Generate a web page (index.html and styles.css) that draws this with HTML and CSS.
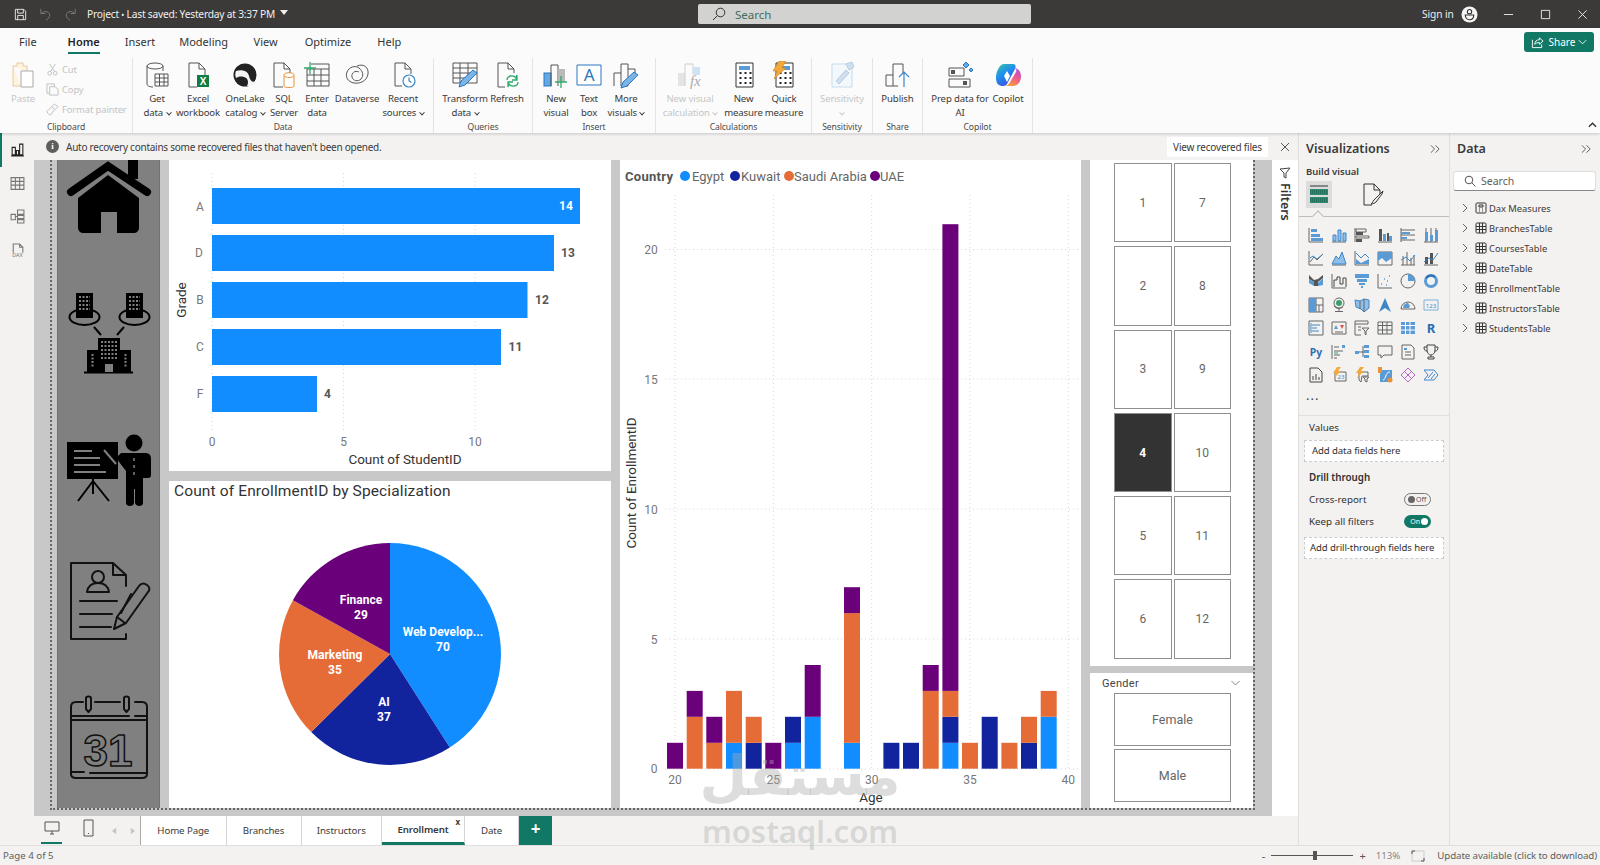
FILE: index.html
```html
<!DOCTYPE html>
<html lang="en">
<head>
<meta charset="utf-8">
<title>Power BI</title>
<link rel="stylesheet" href="styles.css">
</head>
<body>
<header class="titlebar">
  <div class="tb-left">
    <svg class="tb-ico" viewBox="0 0 16 16"><path d="M2.500 2.500h9l2 2v9h-11zM5 2.500v4h6v-4M5 13.500v-4.500h6v4.500"/></svg>
    <svg class="tb-ico dim" viewBox="0 0 16 16"><path d="M3 2v5h5M3.500 7c2-3 8-3 9 1 .5 3-2 5-4 6"/></svg>
    <svg class="tb-ico dim" viewBox="0 0 16 16"><path d="M13 2v5H8M12.500 7c-2-3-8-3-9 1-.5 3 2 5 4 6"/></svg>
    <span class="tb-title">Project <small>•</small> Last saved: Yesterday at 3:37 PM</span>
    <svg class="tb-caret" viewBox="0 0 8 5"><path d="M0 0h8L4 5z"/></svg>
  </div>
  <div class="tb-search">
    <svg class="tb-sicon" viewBox="0 0 14 14"><circle cx="8.500" cy="5.500" r="4.300"/><path d="M5.500 8.500 1 13"/></svg>
    <span>Search</span>
  </div>
  <div class="tb-right">
    <span class="signin">Sign in</span>
    <svg class="avatar" viewBox="0 0 18 18"><circle cx="9" cy="9" r="8.500" class="av-bg"/><circle cx="9" cy="6" r="2.300" class="av-l"/><path d="M4.500 9.500h9c0 3-2 5-4.500 5s-4.500-2-4.500-5z" class="av-l"/></svg>
    <svg class="win-ico win-min" viewBox="0 0 12 12"><path d="M1 6h10"/></svg>
    <svg class="win-ico win-max" viewBox="0 0 12 12"><path d="M1.500 1.500h9v9h-9z"/></svg>
    <svg class="win-ico" viewBox="0 0 12 12"><path d="M1.500 1.500l9 9M10.500 1.500l-9 9"/></svg>
  </div>
</header>

<section class="ribbon">
  <nav class="rb-tabs">
    <span class="rb-tab t-file">File</span>
    <span class="rb-tab t-home active">Home</span>
    <span class="rb-tab t-insert">Insert</span>
    <span class="rb-tab t-model">Modeling</span>
    <span class="rb-tab t-view">View</span>
    <span class="rb-tab t-opt">Optimize</span>
    <span class="rb-tab t-help">Help</span>
    <button class="share">
      <svg viewBox="0 0 14 14"><path d="M1.500 4v8.500h10V9M4 9c0-3 2-5 5-5V2l4 3.500L9 9V7C7 7 5.500 7.500 4 9z"/></svg>
      Share
      <svg class="share-c" viewBox="0 0 10 6"><path d="M1 1l4 4 4-4"/></svg>
    </button>
  </nav>
  <div class="rb-groups">
    <div class="grp g-clip">
      <div class="clip-row">
        <div class="btn disabled paste">
          <svg class="ico" viewBox="0 0 26 28"><path class="o-p" d="M3 5h4V2h6v3h4v6M3 5v20h8"/><path class="gr-s" d="M11 10h12v16H11z"/></svg>
          <span>Paste</span>
        </div>
        <ul class="clip-list">
          <li><svg viewBox="0 0 12 14"><path d="M3 1l5 8M9 1L4 9"/><circle cx="3" cy="11" r="2"/><circle cx="9" cy="11" r="2"/></svg>Cut</li>
          <li><svg viewBox="0 0 14 14"><path d="M1 1h8v3M1 1v10h3M4 4h6l3 3v6H4z"/></svg>Copy</li>
          <li><svg viewBox="0 0 14 14"><path d="M9 1l4 3-3 3-4-3zM6 4L1 9c1 3 3 4 4 4l4-6"/></svg>Format painter</li>
        </ul>
      </div>
      <div class="grp-label">Clipboard</div>
    </div>

    <div class="grp g-data">
      <div class="btn-row">
        <div class="btn">
          <svg class="ico" viewBox="0 0 26 28"><ellipse class="k" cx="11" cy="5" rx="8" ry="3"/><path class="k" d="M3 5v18c0 2 3 3 6 3M19 5v5"/><path class="k" d="M11 13h13v12H11zM11 17h13M11 21h13M15.500 13v12M20 13v12"/></svg>
          <span>Get<br>data <i class="chev"></i></span>
        </div>
        <div class="btn">
          <svg class="ico" viewBox="0 0 26 28"><path class="k" d="M4 2h10l6 6v6M14 2v6h6M4 2v24h8"/><rect class="f-xl" x="12" y="14" width="12" height="12"/><text class="xl-t" x="18" y="24">X</text></svg>
          <span>Excel<br>workbook</span>
        </div>
        <div class="btn">
          <svg class="ico" viewBox="0 0 26 28"><circle cx="13" cy="14" r="11.500" class="f-k"/><path d="M4 10c6-2 12 0 13 5s4 7 7 5c-1 4-6 6-9 5 2-4 1-8-3-9s-6 0-8 1c-1-2-1-5 0-7z" class="f-w"/></svg>
          <span>OneLake<br>catalog <i class="chev"></i></span>
        </div>
        <div class="btn">
          <svg class="ico" viewBox="0 0 26 28"><path class="k" d="M3 2h10l6 6v6M13 2v6h6M3 2v24h9"/><path class="o" d="M13 14c0-3 10-3 10 0v11c0 2-10 2-10 0z"/><path class="o" d="M13 15c2 2 8 2 10 0"/></svg>
          <span>SQL<br>Server</span>
        </div>
        <div class="btn">
          <svg class="ico" viewBox="0 0 26 28"><path class="k" d="M7 3h18v22H3V8M3 8h22M3 14h22M3 20h22M10 8v17M17 8v17"/><path class="g2" d="M0 7h12M6 1v12"/></svg>
          <span>Enter<br>data</span>
        </div>
        <div class="btn">
          <svg class="ico" viewBox="0 0 26 28"><path class="k" d="M13 5c7-3 12 2 11 8-1 7-8 10-14 9S1 16 3 11s8-7 12-4 5 8 2 11-8 2-9-2 3-7 7-5"/></svg>
          <span>Dataverse</span>
        </div>
        <div class="btn">
          <svg class="ico" viewBox="0 0 26 28"><path class="k" d="M5 2h10l6 6v5M15 2v6h6M5 2v23h7"/><circle class="bl" cx="19" cy="20" r="6"/><path class="bl" d="M19 16.500V20l2.500 1.500"/></svg>
          <span>Recent<br>sources <i class="chev"></i></span>
        </div>
      </div>
      <div class="grp-label">Data</div>
    </div>

    <div class="grp g-query">
      <div class="btn-row">
        <div class="btn">
          <svg class="ico" viewBox="0 0 26 28"><path class="k" d="M1 2h24v20H1zM1 7h24M1 12h24M1 17h14M8 2v20M16 2v15"/><path class="f-pen" d="M7 26l2-6L21 9l4 3-12 12z"/></svg>
          <span>Transform<br>data <i class="chev"></i></span>
        </div>
        <div class="btn">
          <svg class="ico" viewBox="0 0 26 28"><path class="k" d="M4 2h10l6 6v4M14 2v6h6M4 2v24h7"/><path class="g2" d="M13 19c0-4 6-6 9-2l1-3v5h-5M24 21c0 4-6 6-9 2l-1 3v-5h5"/></svg>
          <span>Refresh</span>
        </div>
      </div>
      <div class="grp-label">Queries</div>
    </div>

    <div class="grp g-insert">
      <div class="btn-row">
        <div class="btn">
          <svg class="ico" viewBox="0 0 26 28"><rect x="1" y="12" width="7" height="13" class="f-bl"/><path class="k" d="M8 25V4h7v21"/><rect x="15" y="8" width="7" height="13" class="f-gr"/><path class="g2" d="M12 21h12M18 15v12"/></svg>
          <span>New<br>visual</span>
        </div>
        <div class="btn">
          <svg class="ico" viewBox="0 0 26 28"><path class="bln" d="M1 4h24v20H1z"/><text class="a-t" x="13" y="20">A</text></svg>
          <span>Text<br>box</span>
        </div>
        <div class="btn">
          <svg class="ico" viewBox="0 0 26 28"><path class="k" d="M1 25V12h7M8 25V3h7v22zM15 8h7v6"/><path class="f-pen" d="M8 27l2-6L21 11l4 3-11 11z"/></svg>
          <span>More<br>visuals <i class="chev"></i></span>
        </div>
      </div>
      <div class="grp-label">Insert</div>
    </div>

    <div class="grp g-calc">
      <div class="btn-row">
        <div class="btn disabled">
          <svg class="ico" viewBox="0 0 26 28"><rect x="1" y="12" width="7" height="13" class="f-lg"/><path class="lg" d="M8 25V3h8v10"/><rect x="16" y="6" width="7" height="8" class="f-lb"/><text class="fx-t" x="13" y="25">fx</text></svg>
          <span>New visual<br>calculation <i class="chev"></i></span>
        </div>
        <div class="btn">
          <svg class="ico" viewBox="0 0 26 28"><use href="#calc"/></svg>
          <span>New<br>measure</span>
        </div>
        <div class="btn">
          <svg class="ico" viewBox="0 0 26 28"><use href="#calc"/><path class="f-bolt" d="M8 0h7l-4 7h4L3 18l3-8H2z"/></svg>
          <span>Quick<br>measure</span>
        </div>
      </div>
      <div class="grp-label">Calculations</div>
    </div>

    <div class="grp g-sens">
      <div class="btn-row">
        <div class="btn disabled">
          <svg class="ico" viewBox="0 0 26 28"><path class="lbs" d="M3 3h20v23H3z"/><path class="f-lbs" d="M7 20L17 9l3 3-10 11z"/><path class="f-lbs" d="M17 3l6-2 2 5-5 3z"/></svg>
          <span>Sensitivity<br><i class="chev"></i></span>
        </div>
      </div>
      <div class="grp-label">Sensitivity</div>
    </div>

    <div class="grp g-share">
      <div class="btn-row">
        <div class="btn">
          <svg class="ico" viewBox="0 0 26 28"><path class="k" d="M1 25V14h7M8 25V3h10v11M1 25h12"/><path class="bl" d="M19 26V11M14 16l5-5 5 5"/></svg>
          <span>Publish</span>
        </div>
      </div>
      <div class="grp-label">Share</div>
    </div>

    <div class="grp g-copilot">
      <div class="btn-row">
        <div class="btn">
          <svg class="ico" viewBox="0 0 26 28"><path class="k" d="M2 7h15v8H2zM2 18h21v8H2z"/><rect x="4" y="9" width="4" height="4" class="f-dk"/><rect x="16" y="20" width="4" height="4" class="f-dk"/><path class="f-bl" d="M19 1l3 3-3 3-3-3zM24 7l2 2-2 2-2-2z"/></svg>
          <span>Prep data for<br>AI</span>
        </div>
        <div class="btn">
          <svg class="ico" viewBox="0 0 26 28">
            <defs>
              <linearGradient id="cpa" x1="0" y1="0" x2="0.600" y2="1"><stop offset="0" stop-color="#37c6a0"/><stop offset=".5" stop-color="#1f8ff0"/><stop offset="1" stop-color="#3a4fd8"/></linearGradient>
              <linearGradient id="cpb" x1="0.800" y1="0" x2="0.300" y2="1"><stop offset="0" stop-color="#b44bd8"/><stop offset=".5" stop-color="#ef5d8c"/><stop offset="1" stop-color="#f5a33b"/></linearGradient>
            </defs>
            <path class="cp1" d="M9 3h9c3 0 3 3 2 5l-7 13c-1 3-3 4-5 4-4 0-7-2-7-8 0-7 4-14 8-14z"/>
            <path class="cp2" d="M18 7c5 0 8 3 8 8 0 7-4 10-9 10H9c3 0 5-2 6-4l6-10c1-2 0-4-3-4z"/>
            <path class="cp3" d="M9 15l3-5 3 5-3 6z"/>
          </svg>
          <span>Copilot</span>
        </div>
      </div>
      <div class="grp-label">Copilot</div>
    </div>
    <svg class="rb-collapse" viewBox="0 0 10 6"><path d="M1 5l4-4 4 4"/></svg>
  </div>
</section>

<svg class="defs" width="0" height="0">
  <symbol id="calc" viewBox="0 0 26 28"><path class="k2" d="M5 2h17v24H5z"/><rect class="f-lbc" x="8" y="5" width="11" height="4"/><path class="dots" d="M8.500 12h2m3 0h2m3 0h2M8.500 17h2m3 0h2m3 0h2M8.500 22h2m3 0h2m3 0h2"/></symbol>
</svg>

<main class="main">
  <aside class="rail">
    <div class="rail-item on"><svg viewBox="0 0 14 14"><path d="M1 13h12M2 12V5h3v7zM6 12V8h2v4zM9 12V2h3v10z"/></svg></div>
    <div class="rail-item"><svg viewBox="0 0 14 14"><path d="M1 1.500h12v11H1zM1 5h12M1 8.500h12M5 1.500v11M9 1.500v11"/></svg></div>
    <div class="rail-item"><svg viewBox="0 0 14 14"><path d="M1 5h4v5H1zM7 1h6v4H7zM7 6h6v3H7zM7 10h6v3H7zM5 7h2"/></svg></div>
    <div class="rail-item"><svg viewBox="0 0 14 14"><path d="M3 9V1h6l3 3v5M9 1v3h3"/><text class="dax" x="7" y="13">DAX</text></svg></div>
  </aside>

  <div class="center">
    <div class="notice">
      <span class="info">i</span>
      <span class="notice-t">Auto recovery contains some recovered files that haven't been opened.</span>
      <button class="recover">View recovered files</button>
      <svg class="notice-x" viewBox="0 0 10 10"><path d="M1 1l8 8M9 1L1 9"/></svg>
    </div>
    <div class="work">
      <div class="canvas">
        <div class="page">
          <div class="side">
            <svg viewBox="57 160 103 648" width="103" height="648">
              <g class="solid">
                <rect x="128" y="155" width="10" height="24"/>
                <path class="roof" d="M71 192l37-26 39 26"/>
                <path d="M108 175l31 23v29c0 4-2 6-6 6H84c-4 0-6-2-6-6v-29z"/>
                <rect class="hole" x="101" y="212" width="16" height="22"/>
              </g>
              <g class="solid">
                <ellipse class="line nofill" cx="84.500" cy="317" rx="15" ry="8"/>
                <ellipse class="line nofill" cx="134.500" cy="317" rx="15" ry="8"/>
                <path d="M76 293h17v25H76zM126 293h17v25h-17zM98 338h22v34H98zM87 350h11v22H87zM120 350h11v22h-11z"/>
                <path class="line" d="M84 372.500h49M94 327l7 8M124 327l-7 8"/>
                <path class="win" d="M79 297h11M79 301h11M79 305h11M79 309h11M129 297h11M129 301h11M129 305h11M129 309h11M101 342h16M101 346h16M101 350h16M101 354h16M101 358h16"/>
                <path class="win" d="M92.500 354v14M125.500 354v14"/>
                <rect class="hole" x="105" y="364" width="8" height="8"/>
              </g>
              <g class="solid">
                <rect x="67" y="442" width="51" height="37"/>
                <path class="brd" d="M74 451h18M74 458h26M74 465h26M74 472h32"/>
                <path class="line" d="M93 479v15M93 481L78 501M93 481l16 20"/>
                <circle cx="134" cy="443" r="8.500"/>
                <path d="M130 453h15c4 0 6 2 6 6v16c0 2-1 3-3 3h-5v25c0 4-7 4-8 0v-14h-1v14c0 4-8 4-8 0v-32l-10-13 5-5z"/>
                <path class="w3" d="M134 458v18"/>
                <path class="line gb" d="M104 450l12 14"/>
              </g>
              <g class="outline">
                <path d="M113 563H71v76h55v-5M113 563l13 12v11M113 563v12h13"/>
                <circle cx="98" cy="577" r="6"/>
                <path d="M87 592c1-6 5-9 11-9s10 3 11 9z"/>
                <path d="M80 601h37M80 614h32M80 627h31"/>
                <path d="M114 629l3-12 22-31c2-3 5-3 8-1s3 5 1 7l-22 31z"/>
                <path d="M117 617l8 6M131 594l-10 19"/>
              </g>
              <g class="outline">
                <path d="M83 702h-7c-3 0-5 2-5 5v67c0 3 2 4 5 4h66c3 0 5-1 5-4v-67c0-3-2-5-5-5h-7M95 702h25"/>
                <path d="M71 716h58M135 716h12M71 720h76M71 772h13M90 773h57"/>
                <path d="M86 709v-11c0-2 5-2 5 0v11l-2.500 3zM124 709v-11c0-2 5-2 5 0v11l-2.500 3z"/>
                <text class="cal" x="108" y="766">31</text>
              </g>
            </svg>
          </div>

          <div class="col-mid">
            <article class="card c1">
              <svg viewBox="169 160 442 311" width="442" height="311">
                <path class="grid" d="M212 173v257M343.500 173v257M475 173v257"/>
                <rect class="egypt" x="212" y="188" width="368" height="36"/>
                <rect class="egypt" x="212" y="235" width="342" height="36"/>
                <rect class="egypt" x="212" y="282" width="315.500" height="36"/>
                <rect class="egypt" x="212" y="329" width="289" height="36"/>
                <rect class="egypt" x="212" y="376" width="105" height="36"/>
                <text class="tick mid" x="200" y="211">A</text>
                <text class="tick mid" x="199" y="257">D</text>
                <text class="tick mid" x="200" y="304">B</text>
                <text class="tick mid" x="200" y="351">C</text>
                <text class="tick mid" x="200" y="398">F</text>
                <text class="val-w mid" x="566" y="210">14</text>
                <text class="val mid" x="568" y="257">13</text>
                <text class="val mid" x="542" y="304">12</text>
                <text class="val mid" x="515.500" y="351">11</text>
                <text class="val mid" x="327.500" y="398">4</text>
                <text class="tick mid" x="212" y="446">0</text>
                <text class="tick mid" x="343.500" y="446">5</text>
                <text class="tick mid" x="475" y="446">10</text>
                <text class="axis mid" x="405" y="464">Count of StudentID</text>
                <text class="axis mid" transform="translate(186 300) rotate(-90)">Grade</text>
              </svg>
            </article>
            <article class="card c2">
              <svg viewBox="169 481 442 327" width="442" height="327">
                <text class="ctitle" x="174" y="496">Count of EnrollmentID by Specialization</text>
                <path class="egypt" d="M390 654V543A111 111 0 0 1 449.800 747.500Z"/>
                <path class="kuwait" d="M390 654L449.800 747.500A111 111 0 0 1 311.200 732.100Z"/>
                <path class="saudi" d="M390 654L311.200 732.100A111 111 0 0 1 292.900 600.300Z"/>
                <path class="uae" d="M390 654L292.900 600.300A111 111 0 0 1 390 543Z"/>
                <text class="pie mid" x="443" y="636">Web Develop...</text>
                <text class="pie mid" x="443" y="651">70</text>
                <text class="pie mid" x="384" y="706">AI</text>
                <text class="pie mid" x="384" y="721">37</text>
                <text class="pie mid" x="335" y="659">Marketing</text>
                <text class="pie mid" x="335" y="674">35</text>
                <text class="pie mid" x="361" y="604">Finance</text>
                <text class="pie mid" x="361" y="619">29</text>
              </svg>
            </article>
          </div>

          <article class="card c3">
            <svg viewBox="620 160 461 648" width="461" height="648">
              <text class="lg-title" x="625" y="181">Country</text>
              <circle class="egypt" cx="685" cy="176" r="5"/><text class="lg-item" x="692" y="181">Egypt</text>
              <circle class="kuwait" cx="735" cy="176" r="5"/><text class="lg-item" x="741" y="181">Kuwait</text>
              <circle class="saudi" cx="789" cy="176" r="5"/><text class="lg-item" x="794" y="181">Saudi Arabia</text>
              <circle class="uae" cx="875" cy="176" r="5"/><text class="lg-item" x="880" y="181">UAE</text>
              <path class="grid" d="M675 195v574M773.300 195v574M871.700 195v574M970 195v574M1068.300 195v574M665 249.500h413M665 379h413M665 509h413M665 639h413M665 769h413"/>
              <g>
                <rect class="uae" x="667" y="742.800" width="16" height="25.900"/>
                <rect class="saudi" x="686.700" y="716.800" width="16" height="51.900"/><rect class="uae" x="686.700" y="690.900" width="16" height="25.900"/>
                <rect class="saudi" x="706.300" y="742.800" width="16" height="25.900"/><rect class="uae" x="706.300" y="716.800" width="16" height="26"/>
                <rect class="egypt" x="726" y="742.800" width="16" height="25.900"/><rect class="saudi" x="726" y="690.900" width="16" height="51.900"/>
                <rect class="kuwait" x="745.700" y="742.800" width="16" height="25.900"/><rect class="saudi" x="745.700" y="716.800" width="16" height="26"/>
                <rect class="uae" x="765.300" y="742.800" width="16" height="25.900"/>
                <rect class="egypt" x="785" y="742.800" width="16" height="25.900"/><rect class="kuwait" x="785" y="716.800" width="16" height="26"/>
                <rect class="egypt" x="804.700" y="716.800" width="16" height="51.900"/><rect class="uae" x="804.700" y="665" width="16" height="51.800"/>
                <rect class="egypt" x="844" y="742.800" width="16" height="25.900"/><rect class="saudi" x="844" y="613.100" width="16" height="129.700"/><rect class="uae" x="844" y="587.200" width="16" height="25.900"/>
                <rect class="kuwait" x="883.400" y="742.800" width="16" height="25.900"/>
                <rect class="kuwait" x="903" y="742.800" width="16" height="25.900"/>
                <rect class="saudi" x="922.700" y="690.900" width="16" height="77.800"/><rect class="uae" x="922.700" y="665" width="16" height="25.900"/>
                <rect class="egypt" x="942.400" y="742.800" width="16" height="25.900"/><rect class="kuwait" x="942.400" y="716.800" width="16" height="26"/><rect class="saudi" x="942.400" y="690.900" width="16" height="25.900"/><rect class="uae" x="942.400" y="224.200" width="16" height="466.700"/>
                <rect class="saudi" x="962" y="742.800" width="16" height="25.900"/>
                <rect class="kuwait" x="981.700" y="716.800" width="16" height="51.900"/>
                <rect class="saudi" x="1001.400" y="742.800" width="16" height="25.900"/>
                <rect class="kuwait" x="1021" y="742.800" width="16" height="25.900"/><rect class="saudi" x="1021" y="716.800" width="16" height="26"/>
                <rect class="egypt" x="1040.700" y="716.800" width="16" height="51.900"/><rect class="saudi" x="1040.700" y="690.900" width="16" height="25.900"/>
              </g>
              <text class="tick mid" x="651" y="254">20</text>
              <text class="tick mid" x="651" y="384">15</text>
              <text class="tick mid" x="651" y="514">10</text>
              <text class="tick mid" x="654" y="644">5</text>
              <text class="tick mid" x="654" y="773">0</text>
              <text class="tick mid" x="675" y="784">20</text>
              <text class="tick mid" x="773.300" y="784">25</text>
              <text class="tick mid" x="871.700" y="784">30</text>
              <text class="tick mid" x="970" y="784">35</text>
              <text class="tick mid" x="1068.300" y="784">40</text>
              <text class="axis mid" x="871" y="802">Age</text>
              <text class="axis mid" transform="translate(636 483) rotate(-90)">Count of EnrollmentID</text>
            </svg>
          </article>

          <div class="col-right">
            <article class="card slicer">
              <button class="chip">1</button><button class="chip">7</button>
              <button class="chip">2</button><button class="chip">8</button>
              <button class="chip">3</button><button class="chip">9</button>
              <button class="chip sel">4</button><button class="chip">10</button>
              <button class="chip">5</button><button class="chip">11</button>
              <button class="chip">6</button><button class="chip">12</button>
            </article>
            <article class="card gender">
              <div class="gender-h"><span>Gender</span><svg viewBox="0 0 10 6"><path d="M1 1l4 4 4-4"/></svg></div>
              <button class="chip big">Female</button>
              <button class="chip big">Male</button>
            </article>
          </div>
        </div>
      </div>
      <aside class="filters">
        <svg viewBox="0 0 12 12"><path d="M1 2l10-1-4 5v5L5 10V6z"/></svg>
        <span>Filters</span>
      </aside>
    </div>
    <nav class="pages">
      <div class="view-sw">
        <span class="view-desk"><svg viewBox="0 0 16 14"><path d="M1 1h14v9H1zM6 13h4M8 10v3"/></svg></span>
        <span class="view-ph"><svg viewBox="0 0 11 18"><path d="M1 1h9v16H1zM5 14.500h1"/></svg></span>
        <svg class="pg-arrow a1" viewBox="0 0 6 8"><path d="M5 0v8L0 4z"/></svg>
        <svg class="pg-arrow a2" viewBox="0 0 6 8"><path d="M1 0v8l5-4z"/></svg>
      </div>
      <span class="ptab w-home">Home Page</span>
      <span class="ptab w-br">Branches</span>
      <span class="ptab w-in">Instructors</span>
      <span class="ptab w-en active">Enrollment<b>x</b></span>
      <span class="ptab w-da">Date</span>
      <span class="ptab add">+</span>
    </nav>
  </div>

  <aside class="viz">
    <h2 class="pane-h">Visualizations<svg viewBox="0 0 12 10"><path d="M1 1l4 4-4 4M6 1l4 4-4 4"/></svg></h2>
    <h3 class="build">Build visual</h3>
    <div class="build-tabs">
      <span class="bt on"><svg viewBox="0 0 24 24"><path class="dk" d="M3 3h18"/><rect class="tg" x="3" y="6" width="18" height="6"/><rect class="tg" x="3" y="14" width="18" height="6"/><path class="stripe" d="M3 8h18M3 10h18M3 16h18M3 18h18"/></svg></span>
      <span class="bt"><svg viewBox="0 0 24 24"><path class="dk" d="M11 22H3V1h10l6 6v4M13 1v6h6"/><path class="dk" d="M10 21c2-1 2-4 4-5l8-8-1 3-6 8c-1 1-3 2-5 2z"/></svg></span>
    </div>
    <div class="build-line"><i></i></div>
    <div class="viz-grid">
      <svg viewBox="0 0 16 16"><path class="s" d="M1 1v14h14"/><path class="b" d="M3 2h6v3H3zM3 7h9v3H3zM3 11h12v3H3z"/></svg>
      <svg viewBox="0 0 16 16"><path class="s" d="M1 15h14"/><path class="sb" d="M2 8h3v6H2zM7 3h3v11H7zM12 6h3v8h-3z"/></svg>
      <svg viewBox="0 0 16 16"><path class="s" d="M1 1v14M2 2h10v3H2zM2 9h13v2H2z"/><path class="d" d="M2 5h7v3H2zM2 12h6v3H2z"/></svg>
      <svg viewBox="0 0 16 16"><path class="s" d="M1 15h14"/><path class="d" d="M2 2h3v12H2zM10 6h2v8h-2z"/><path class="b" d="M6 7h3v7H6zM12 9h3v5h-3z"/></svg>
      <svg viewBox="0 0 16 16"><path class="s" d="M1 1v14M1 3h14M1 8h14M1 13h14"/><path class="b" d="M1 5h9v2H1zM1 10h6v2H1z"/></svg>
      <svg viewBox="0 0 16 16"><path class="s" d="M1 15h14M3 1v14M8 1v14M13 1v14"/><path class="b" d="M2 5h3v9H2zM7 8h3v6H7zM12 3h3v11h-3z"/></svg>
      <svg viewBox="0 0 16 16"><path class="s" d="M1 1v14h14M2 12l4-5 3 3 6-6"/><path class="sbl" d="M2 8l3-2 4 3 6-5"/></svg>
      <svg viewBox="0 0 16 16"><path class="s" d="M1 15h14"/><path class="sb" d="M1 14l4-8 3 3 3-7 4 12z"/></svg>
      <svg viewBox="0 0 16 16"><path class="s" d="M1 1v14h14"/><path class="sbl" d="M2 3l5 5 4-4 4 4"/><path class="b" d="M2 9l5 4 8-4v5H2z"/></svg>
      <svg viewBox="0 0 16 16"><path class="s" d="M1 2h14v13H1z"/><path class="b" d="M1 2h14v6l-6 4-4-4-4 3z"/></svg>
      <svg viewBox="0 0 16 16"><path class="s" d="M1 15h14M3 6v9M7 2v13M11 8v7M14 5v10"/><path class="sbl" d="M1 10l5-3 4 4 5-6"/></svg>
      <svg viewBox="0 0 16 16"><path class="d" d="M2 7h3v7H2zM7 3h3v11H7z"/><path class="s" d="M1 15h14"/><path class="sbl" d="M1 12l5-4 4 2 5-7"/></svg>
      <svg viewBox="0 0 16 16"><path class="d" d="M1 2l5 5 4-1 5-4v3l-5 4v4H6V9L1 6z"/><path class="b" d="M1 6l5 3v4l-5-3zM10 10l5-5v7l-5 1z"/></svg>
      <svg viewBox="0 0 16 16"><path class="s" d="M1 1v14h14"/><path class="sd" d="M3 14V7h3V4h3v7h3V5h3v9"/></svg>
      <svg viewBox="0 0 16 16"><path class="b" d="M1 1h14v4H1zM3 6h10v3H3zM5 10h6v2H5zM7 13h2v2H7z"/></svg>
      <svg viewBox="0 0 16 16"><path class="s" d="M1 1v14h14"/><path class="dots-b" d="M4 11h1M7 6h1M10 8h1M12 3h1M9 12h1"/></svg>
      <svg viewBox="0 0 16 16"><circle class="s" cx="8" cy="8" r="7"/><path class="b" d="M8 8V1a7 7 0 0 1 7 7z"/></svg>
      <svg viewBox="0 0 16 16"><circle class="ring" cx="8" cy="8" r="5.500"/><path class="ring2" d="M3 5a6 6 0 0 1 9-1"/></svg>
      <svg viewBox="0 0 16 16"><path class="s" d="M1 1h14v14H1zM8 1v14M8 8h7M11 8v7"/><path class="b" d="M1 1h7v7H1zM1 8h7v7H1z"/></svg>
      <svg viewBox="0 0 16 16"><circle class="s" cx="8" cy="6" r="5"/><circle class="gn" cx="8" cy="6" r="3"/><path class="s" d="M8 11v3M4 14.500h8M3 9c2 3 6 3 9 1"/></svg>
      <svg viewBox="0 0 16 16"><path class="sb" d="M1 3l5 1 4-2 5 1v8l-5 4-3-3-5-2z"/><path class="s" d="M6 4v8M10 2v13"/></svg>
      <svg viewBox="0 0 16 16"><path class="bd" d="M8 1l6 14-6-4-6 4z"/></svg>
      <svg viewBox="0 0 16 16"><path class="s" d="M1 12a7 7 0 0 1 14 0z"/><path class="b" d="M3 11a5 5 0 0 1 5-5l2 3-1 2z"/></svg>
      <svg viewBox="0 0 16 16"><path class="sb2" d="M1 3h14v10H1z"/><text class="vt" x="8" y="10.500">123</text></svg>
      <svg viewBox="0 0 16 16"><path class="s" d="M1 1h14v14H1z"/><path class="sbl" d="M4 5h8M4 8h5M4 11h7"/><path class="sbl" d="M3 3v10"/></svg>
      <svg viewBox="0 0 16 16"><path class="s" d="M1 2h14v12H1zM4 12h8"/><path class="b" d="M3 9l2-4 2 4z"/><path class="r" d="M9 5h4l-2 4z"/></svg>
      <svg viewBox="0 0 16 16"><path class="s" d="M1 1h13v3H1zM1 4v11h6M4 7h3M4 10h3"/><path class="s" d="M8 8h7l-3 3v4l-1-1v-3z"/></svg>
      <svg viewBox="0 0 16 16"><path class="s" d="M1 2h14v12H1zM1 5.500h14M1 10h14M5.500 2v12M10 2v12"/></svg>
      <svg viewBox="0 0 16 16"><path class="b" d="M1 2h14v12H1z"/><path class="w" d="M1 5.500h14M1 10h14M5.500 2v12M10 2v12"/></svg>
      <svg viewBox="0 0 16 16"><text class="vr" x="8" y="12.500">R</text></svg>
      <svg viewBox="0 0 20 16"><text class="vpy" x="10" y="13">Py</text></svg>
      <svg viewBox="0 0 16 16"><path class="s" d="M1 1v14M3 3h5M3 7h9M3 11h6M3 14h3"/><path class="b" d="M11 1h3v3h-3z"/><path class="gnl" d="M3 9h4"/></svg>
      <svg viewBox="0 0 16 16"><path class="b" d="M1 7h4v3H1zM10 1h5v3h-5zM10 6h5v3h-5zM10 11h5v3h-5z"/><path class="s" d="M5 8h5M9 2v11"/></svg>
      <svg viewBox="0 0 16 16"><path class="s" d="M1 2h14v9H7l-3 3v-3H1z"/></svg>
      <svg viewBox="0 0 16 16"><path class="s" d="M2 1h9l3 3v11H2zM5 8h6M5 11h6"/><path class="b" d="M4 4h3v2H4z"/></svg>
      <svg viewBox="0 0 16 16"><path class="sd" d="M4 1h8v5c0 3-2 5-4 5s-4-2-4-5zM4 3H1c0 3 1 4 3 4M12 3h3c0 3-1 4-3 4M8 11v2M5 15h6v-2H5z"/></svg>
      <svg viewBox="0 0 16 16"><path class="sd" d="M2 1h8l4 4v10H2z"/><path class="sd" d="M5 13V9M8 13V7M11 13v-3"/></svg>
      <svg viewBox="0 0 16 16"><path class="s" d="M4 5h11v9H4z"/><path class="bolt" d="M6 0h4L7 4h3L3 11l2-5H2z"/><text class="vt" x="10" y="12">23</text></svg>
      <svg viewBox="0 0 16 16"><path class="s" d="M5 5h9v4H8l-1 6-2-2z"/><path class="bolt" d="M6 0h4L7 4h3L3 11l2-5H2z"/><path class="s" d="M9 10h6l-2 2v3l-2-1v-2z"/></svg>
      <svg viewBox="0 0 16 16"><path class="b" d="M3 3h12v12H3z"/><path class="wl" d="M6 13c3 0 2-8 7-8"/><circle class="o2" cx="13" cy="13" r="2.500"/><rect class="o2" x="1" y="0" width="4" height="6"/></svg>
      <svg viewBox="0 0 16 16"><path class="p2" d="M8 1l7 7-7 7-7-7zM4 4l8 8M12 4l-8 8"/></svg>
      <svg viewBox="0 0 16 16"><path class="sbl" d="M1 3h10l4 5-4 5H1l4-5zM5 11l5-6M8 12l4-5"/></svg>
    </div>
    <div class="more">...</div>
    <div class="wells">
      <div class="well-t">Values</div>
      <div class="well">Add data fields here</div>
      <div class="well-h">Drill through</div>
      <div class="opt"><span>Cross-report</span><span class="sw off"><i></i>Off</span></div>
      <div class="opt"><span>Keep all filters</span><span class="sw on">On<i></i></span></div>
      <div class="well tight">Add drill-through fields here</div>
    </div>
  </aside>

  <aside class="data">
    <h2 class="pane-h">Data<svg viewBox="0 0 12 10"><path d="M1 1l4 4-4 4M6 1l4 4-4 4"/></svg></h2>
    <div class="data-search">
      <svg viewBox="0 0 12 12"><circle cx="5" cy="5" r="3.800"/><path d="M8 8l3.500 3.500"/></svg>
      <span>Search</span>
    </div>
    <ul class="tree">
      <li><svg class="tw" viewBox="0 0 6 10"><path d="M1 1l4 4-4 4"/></svg><svg class="tb" viewBox="0 0 12 12"><path d="M2 1h8c1 0 1 1 1 1v8s0 1-1 1H2c-1 0-1-1-1-1V2s0-1 1-1zM4 3h4v2H4zM4 7h1M7 7h1M4 9h1M7 9h1"/></svg>Dax Measures</li>
      <li><svg class="tw" viewBox="0 0 6 10"><path d="M1 1l4 4-4 4"/></svg><svg class="tb" viewBox="0 0 12 12"><use href="#tbl"/></svg>BranchesTable</li>
      <li><svg class="tw" viewBox="0 0 6 10"><path d="M1 1l4 4-4 4"/></svg><svg class="tb" viewBox="0 0 12 12"><use href="#tbl"/></svg>CoursesTable</li>
      <li><svg class="tw" viewBox="0 0 6 10"><path d="M1 1l4 4-4 4"/></svg><svg class="tb" viewBox="0 0 12 12"><use href="#tbl"/></svg>DateTable</li>
      <li><svg class="tw" viewBox="0 0 6 10"><path d="M1 1l4 4-4 4"/></svg><svg class="tb" viewBox="0 0 12 12"><use href="#tbl"/></svg>EnrollmentTable</li>
      <li><svg class="tw" viewBox="0 0 6 10"><path d="M1 1l4 4-4 4"/></svg><svg class="tb" viewBox="0 0 12 12"><use href="#tbl"/></svg>InstructorsTable</li>
      <li><svg class="tw" viewBox="0 0 6 10"><path d="M1 1l4 4-4 4"/></svg><svg class="tb" viewBox="0 0 12 12"><use href="#tbl"/></svg>StudentsTable</li>
    </ul>
    <svg class="defs" width="0" height="0"><symbol id="tbl" viewBox="0 0 12 12"><path d="M2 1h8c1 0 1 1 1 1v8s0 1-1 1H2c-1 0-1-1-1-1V2s0-1 1-1zM1 4.500h10M1 7.500h10M4.500 1v10M7.500 1v10"/></symbol></svg>
  </aside>
</main>

<footer class="status">
  <span class="st-page">Page 4 of 5</span>
  <div class="st-right">
    <span class="zm-minus">-</span>
    <span class="slider"><i></i></span>
    <span class="zm-plus">+</span>
    <span class="zm-val">113%</span>
    <svg class="fit" viewBox="0 0 14 12"><path d="M1 1h12v10H1z"/><path class="fit-c" d="M1 4V1h3M13 8v3h-3"/></svg>
    <span class="st-upd">Update available (click to download)</span>
  </div>
</footer>

<div class="watermark" aria-hidden="true">
  <span class="wm-ar">مستقل</span>
  <span class="wm-en">mostaql.com</span>
</div>
</body>
</html>
```

FILE: styles.css
```css
* { box-sizing: border-box; }
html, body { margin: 0; padding: 0; }
body {
  width: 1600px; height: 865px; overflow: hidden; position: relative;
  display: flex; flex-direction: column;
  font-family: "Noto Sans", "Open Sans", sans-serif;
  font-size: 10.5px; color: #323130; background: #f3f2f1;
}
svg { display: block; fill: none; }
.defs { position: absolute; }
h2, h3, ul { margin: 0; padding: 0; list-style: none; }
button { font: inherit; border: 0; padding: 0; }

/* title bar */
.titlebar { height: 28px; flex: none; background: #3b3a39; display: flex; align-items: center; color: #fff; position: relative; }
.tb-left { display: flex; align-items: center; width: 698px; flex: none; padding-left: 13px; }
.tb-ico { width: 15px; height: 15px; stroke: #e8e8e8; stroke-width: 1; margin-right: 10px; }
.tb-ico.dim { stroke: #7d7c7b; }
.tb-title { margin-left: -1px; font-size: 10.2px; letter-spacing: -.2px; color: #f0f0f0; white-space: nowrap; }
.tb-title small { font-size: 8px; }
.tb-caret { width: 8px; height: 5px; margin: -3px 0 0 5px; fill: #eee; }
.tb-search { width: 333px; height: 20px; background: #d2d2d0; border-radius: 2px; display: flex; align-items: center; padding-left: 14px; color: #3e6d62; font-size: 11.5px; flex: none; }
.tb-sicon { width: 14px; height: 14px; stroke: #333; margin-right: 9px; }
.tb-right { display: flex; align-items: center; margin-left: auto; padding-right: 12px; }
.signin { font-size: 10.2px; letter-spacing: -.1px; color: #eee; width: 39px; }
.avatar { width: 17px; height: 17px; margin-right: 25px; }
.av-bg { fill: #f5f5f5; }
.av-l { stroke: #333; stroke-width: 1.2; }
.win-ico { width: 11px; height: 11px; stroke: #eee; stroke-width: 1; margin-right: 26px; }
.win-ico:last-child { margin-right: 0; }

/* ribbon */
.ribbon { height: 105px; flex: none; background: #fbfbfb; position: relative; z-index: 2; box-shadow: 0 1px 3px rgba(0,0,0,.18); }
.rb-tabs { height: 28px; display: flex; align-items: flex-start; position: relative; font-size: 11px; }
.rb-tab { color: #333; height: 23px; margin-top: 3px; line-height: 21px; border-bottom: 2px solid transparent; }
.t-file { margin-left: 19px; }
.t-home { margin-left: 31px; }
.t-insert { margin-left: 25px; }
.t-model { margin-left: 24px; }
.t-view { margin-left: 25.5px; }
.t-opt { margin-left: 27px; }
.t-help { margin-left: 26px; }
.rb-tab.active { font-weight: 600; border-bottom-color: #117865; color: #252423; }
.share { margin: 4px 6px 0 auto; width: 70px; height: 20px; background: #117865; color: #fff; border-radius: 3px; display: flex; align-items: center; justify-content: center; gap: 5px; font-size: 10px; }
.share svg { width: 13px; height: 13px; stroke: #fff; }
.share svg.share-c { width: 9px; height: 6px; margin-left: -2px; }
.rb-groups { height: 77px; display: flex; position: relative; }
.grp { height: 75px; margin-top: 2px; display: flex; flex-direction: column; border-right: 1px solid #e4e4e4; flex: none; }
.g-clip { width: 133px; }
.g-data { width: 301px; padding-left: 5px; }
.g-query { width: 99px; padding-left: 4px; }
.g-insert { width: 123px; padding-left: 7px; }
.g-calc { width: 156px; padding-left: 4px; }
.g-sens { width: 61px; }
.g-share { width: 50px; }
.g-copilot { width: 110px; padding-left: 11px; }
.g-data .grp-label { margin-left: -5px; }
.g-query .grp-label { margin-left: -4px; }
.g-insert .grp-label { margin-left: -7px; }
.g-calc .grp-label { margin-left: -4px; }
.g-copilot .grp-label { margin-left: -11px; }
.btn-row { display: grid; height: 63px; grid-auto-flow: column; }
.g-data .btn-row { grid-template-columns: 38px 44px 50px 28px 38px 42px 50px; }
.g-query .btn-row { grid-template-columns: 54px 30px; }
.g-insert .btn-row { grid-template-columns: 32px 34px 40px; }
.g-calc .btn-row { grid-template-columns: 60px 47px 34px; }
.g-sens .btn-row, .g-share .btn-row { grid-template-columns: 1fr; }
.g-copilot .btn-row { grid-template-columns: 52px 44px; }
.btn { display: flex; flex-direction: column; align-items: center; text-align: center; white-space: nowrap; line-height: 13.500px; font-size: 9.6px; letter-spacing: -.12px; color: #3b3a39; padding-top: 3px; }
.btn .ico { width: 26px; height: 28px; margin-bottom: 3px; flex: none; }
.btn.disabled { color: #c6c6c6; }
.chev { display: inline-block; width: 4px; height: 4px; border-right: 1px solid currentColor; border-bottom: 1px solid currentColor; transform: rotate(45deg) translate(-1px, -1px); margin-left: 1px; }
.grp-label { text-align: center; font-size: 8.6px; letter-spacing: -.1px; color: #4b4a49; line-height: 12px; margin-top: 2px; }
.clip-row { height: 63px; display: flex; }
.paste { width: 46px; }
.clip-list { padding-top: 1px; color: #c4c4c4; font-size: 9.4px; letter-spacing: -.1px; }
.clip-list li { display: flex; align-items: center; height: 20px; white-space: nowrap; }
.clip-list svg { width: 13px; height: 13px; stroke: #bdbdbd; margin-right: 3px; }
.rb-collapse { position: absolute; right: 3px; top: 66px; width: 9px; height: 6px; stroke: #333; stroke-width: 1.5; }
.k, .k2 { stroke: #555; stroke-width: 1; }
.k2 { stroke: #333; fill: #fff; }
.gr-s { stroke: #aaa; fill: #fff; }
.o-p { stroke: #e6c9a0; fill: #fff3e0; }
.f-xl { fill: #107c41; }
.xl-t { fill: #fff; font: 700 10px "Liberation Sans", sans-serif; text-anchor: middle; }
.f-k { fill: #222; }
.f-w { fill: #f4f4f4; }
.o { stroke: #e8923c; fill: #fff; }
.g2 { stroke: #2faa6b; stroke-width: 1.3; }
.bl { stroke: #3b86c6; stroke-width: 1.2; fill: #fff; }
.f-pen { fill: #7db4e6; stroke: #2a78c0; }
.f-bl { fill: #62a8e4; stroke: #2a78c0; }
.f-gr { fill: #b9b9b9; }
.bln { stroke: #2a78c0; stroke-width: 1; fill: #fff; }
.a-t { fill: #2a78c0; font: 400 17px "Noto Sans", sans-serif; text-anchor: middle; }
.f-lg { fill: #e4e4e4; }
.lg { stroke: #cfcfcf; }
.f-lb { fill: #cfe3f6; }
.fx-t { fill: #aaa; font: italic 15px "Liberation Serif", serif; }
.f-lbc { fill: #5a9ad5; }
.dots { stroke: #222; stroke-width: 2; }
.f-bolt { fill: #f2a93b; stroke: #c7791c; stroke-width: .5; }
.lbs { stroke: #c8dbec; fill: #f3f8fc; }
.f-lbs { fill: #cfdfee; stroke: #b6cce0; }
.f-dk { fill: #555; }
.cp1 { fill: url(#cpa); }
.cp2 { fill: url(#cpb); }
.cp3 { fill: #fff; }

/* main */
.main { flex: 1; display: flex; min-height: 0; }
.rail { width: 34px; flex: none; background: #f3f2f1; }
.rail-item { height: 33.5px; display: flex; align-items: center; justify-content: center; border-left: 2px solid transparent; padding-right: 2px; }
.rail-item.on { border-left-color: #117865; }
.rail-item svg { width: 15px; height: 15px; stroke: #777; }
.rail-item.on svg { stroke: #222; }
.dax { fill: #777; stroke: none; font: 5px "Noto Sans", sans-serif; text-anchor: middle; }
.center { width: 1264px; flex: none; display: flex; flex-direction: column; }
.notice { height: 27px; flex: none; display: flex; align-items: center; background: #f3f2f1; padding-left: 12px; position: relative; }
.info { width: 13px; height: 13px; border-radius: 50%; background: #5f5e5d; color: #fff; font: 700 9px/13px "Liberation Serif", serif; text-align: center; }
.notice-t { margin-left: 7px; font-size: 10px; letter-spacing: -.25px; color: #3b3a39; }
.recover { position: absolute; left: 1133px; top: 4px; width: 101px; height: 20px; background: #fff; color: #3b3a39; font-size: 10px; letter-spacing: -.2px; }
.notice-x { position: absolute; left: 1246px; top: 9px; width: 10px; height: 10px; stroke: #555; }
.work { flex: 1; display: flex; min-height: 0; }
.canvas { width: 1238px; background: #c8c8c8; padding: 0 17px 6px 16px; }
.page { height: 650px; border: 2px dotted #666; border-top: 0; padding-left: 5px; display: flex; gap: 9px; }
.side { width: 103px; flex: none; background: #808080; box-shadow: inset 1px 0 0 #4e79a7, inset -1px 0 0 #4e79a7; overflow: hidden; }
.solid { fill: #000; }
.roof { stroke: #000; stroke-width: 8; stroke-linecap: round; fill: none; }
.hole { fill: #808080; }
.line { stroke: #000; stroke-width: 2; }
.gb { stroke: #808080; }
.nofill { fill: #808080; }
.win { stroke: #808080; stroke-width: 2; fill: none; stroke-dasharray: 2 1.500; }
.brd { stroke: #808080; stroke-width: 2; fill: none; }
.w3 { stroke: #808080; stroke-width: 1.500; stroke-dasharray: 3 4; fill: none; }
.outline { stroke: #111; stroke-width: 2; stroke-linejoin: round; stroke-linecap: round; }
.cal { font: 700 44px "Liberation Sans", sans-serif; text-anchor: middle; stroke: #111; stroke-width: 1.500; fill: #808080; }
.col-mid { width: 442px; flex: none; display: flex; flex-direction: column; gap: 10px; }
.card { background: #fff; overflow: hidden; }
.c1 { height: 311px; }
.c2 { flex: 1; }
.c3 { width: 461px; flex: none; }
.col-right { flex: 1; display: flex; flex-direction: column; gap: 7px; }
.grid { stroke: #d5d5d5; stroke-dasharray: 1 3; }
.egypt { fill: #118dff; }
.kuwait { fill: #12239e; }
.saudi { fill: #e66c37; }
.uae { fill: #6b007b; }
.mid { text-anchor: middle; }
.tick { font: 12px Roboto, sans-serif; fill: #777; }
.val { font: 700 12px Roboto, sans-serif; fill: #555; }
.val-w { font: 700 12px Roboto, sans-serif; fill: #fff; }
.axis { font: 13.500px Roboto, sans-serif; letter-spacing: -.05px; fill: #333; }
.ctitle { font: 15.500px Roboto, sans-serif; letter-spacing: .13px; fill: #333; }
.pie { font: 700 12px Roboto, sans-serif; fill: #fff; }
.lg-title { font: 700 13px Roboto, sans-serif; letter-spacing: .3px; fill: #555; }
.lg-item { font: 13px Roboto, sans-serif; fill: #666; }
.slicer { height: 506px; padding: 3px 0 0 24px; display: grid; grid-template-columns: 57.500px 57.500px; column-gap: 2px; grid-auto-rows: 79.300px; row-gap: 4px; }
.chip { background: #fff; border: 1.500px solid #8f8f8f; color: #666; font: 12px Roboto, sans-serif; }
.chip.sel { background: #333; color: #fff; font-weight: 700; }
.gender { flex: 1; padding-left: 24px; }
.gender-h { display: flex; align-items: center; justify-content: space-between; height: 20px; margin-left: -12px; font: 11px Roboto, sans-serif; letter-spacing: .3px; color: #444; padding-right: 12px; }
.gender-h svg { width: 11px; height: 6px; stroke: #888; }
.chip.big { display: block; width: 117px; height: 53px; margin-bottom: 3px; font-size: 12.500px; }
.filters { flex: 1; background: #fff; display: flex; flex-direction: column; align-items: center; padding-top: 7px; }
.filters svg { width: 12px; height: 12px; stroke: #444; }
.filters span { writing-mode: vertical-rl; font-size: 12.500px; font-weight: 600; margin-top: 4px; color: #333; }

/* page tabs */
.pages { height: 29px; flex: none; display: flex; background: #f3f2f1; }
.view-sw { width: 107px; display: flex; align-items: center; position: relative; border-right: 1px solid #aaa; }
.view-desk { margin-left: 7px; width: 21px; height: 26px; border-bottom: 2px solid #117865; display: flex; justify-content: center; padding-top: 3px; }
.view-desk svg { width: 16px; height: 14px; stroke: #555; }
.view-ph { margin-left: 21px; margin-top: -6px; }
.view-ph svg { width: 11px; height: 18px; stroke: #555; }
.pg-arrow { width: 5px; height: 8px; fill: #c4c4c4; }
.a1 { margin-left: 18px; }
.a2 { margin-left: 13px; }
.ptab { background: #fff; display: flex; align-items: center; justify-content: center; font-size: 9.700px; letter-spacing: -.1px; color: #3b3a39; border-right: 1px solid #d5d5d5; position: relative; }
.w-home { width: 85.500px; }
.w-br { width: 75px; }
.w-in { width: 80.500px; }
.w-en { width: 83px; font-weight: 600; border-bottom: 3px solid #117865; }
.w-en b { position: absolute; right: 4px; top: 0; font: 700 8px "Noto Sans", sans-serif; }
.w-da { width: 54px; }
.add { width: 33px; background: #117865; color: #fff; font: 700 17px/1 "Noto Sans", sans-serif; border: 0; padding-bottom: 5px; }

/* right panes */
.viz, .data { width: 151px; flex: none; background: #f3f2f1; border-left: 1px solid #e1dfdd; }
.pane-h { height: 31px; display: flex; align-items: center; justify-content: space-between; padding: 0 8px 0 7px; font-size: 12.500px; font-weight: 600; color: #3b3a39; }
.pane-h svg { width: 11px; height: 10px; stroke: #555; }
.build { font-size: 9.500px; font-weight: 600; padding-left: 7px; height: 17px; line-height: 15px; color: #3b3a39; }
.build-tabs { display: flex; height: 27px; padding-left: 7px; }
.bt { width: 26px; height: 27px; display: flex; align-items: center; justify-content: center; }
.bt + .bt { margin-left: 28px; }
.bt.on { background: #dcdcdc; }
.bt svg { width: 24px; height: 24px; }
.dk { stroke: #333; }
.tg { fill: #2c8a72; }
.stripe { stroke: #1b4f42; stroke-width: .8; stroke-dasharray: 1 1; }
.build-line { height: 9px; border-bottom: 1px solid #bdbdbd; position: relative; }
.build-line i { position: absolute; left: 15px; top: 4px; width: 8px; height: 8px; background: #f3f2f1; border-left: 1px solid #bdbdbd; border-top: 1px solid #bdbdbd; transform: rotate(45deg); }
.viz-grid { display: grid; grid-template-columns: repeat(6, 23.100px); grid-auto-rows: 23.400px; padding: 6px 0 0 5px; justify-items: center; align-items: center; }
.viz-grid svg { width: 16px; height: 16px; }
.s { stroke: #666; }
.b { fill: #5b9bd5; }
.d { fill: #555; }
.sb { fill: #8fc0ec; stroke: #3e86c6; }
.sbl { stroke: #3e86c6; }
.sd { stroke: #444; }
.dots-b { stroke: #5b9bd5; stroke-width: 1.500; }
.ring { stroke: #5b9bd5; stroke-width: 3; }
.ring2 { stroke: #2a6fb0; stroke-width: 2; }
.gn { fill: #3aa06a; }
.gnl { stroke: #3aa06a; }
.bd { fill: #3e86c6; }
.sb2 { stroke: #7fb0dc; }
.vt { fill: #3e86c6; font: 6px "Noto Sans", sans-serif; text-anchor: middle; }
.r { fill: #d9534f; }
.w { stroke: #fff; }
.vr { fill: #2a6fb0; font: 700 13px "Noto Sans", sans-serif; text-anchor: middle; }
.vpy { fill: #2a6fb0; font: 700 13px "Noto Sans", sans-serif; text-anchor: middle; }
.bolt { fill: #f2a93b; }
.wl { stroke: #fff; }
.o2 { fill: #e8923c; }
.p2 { stroke: #b565c9; }
.more { height: 18px; padding-left: 7px; font-size: 13px; line-height: 10px; letter-spacing: 1px; color: #444; margin-top: 3px; }
.wells { border-top: 1px solid #e1dfdd; margin-top: 7px; padding: 4px 5px 0 5px; }
.well-t { padding-left: 5px; height: 16px; line-height: 15px; font-size: 9.800px; }
.well { height: 22px; margin-top: 4px; padding-left: 7px; background: #fff; border: 1px dashed #ccc; line-height: 20px; font-size: 9.600px; letter-spacing: -.1px; white-space: nowrap; }
.well.tight { padding-left: 5px; margin-top: 4px; }
.well-h { padding-left: 5px; margin-top: 9px; height: 18px; font-size: 9.800px; font-weight: 600; }
.opt { display: flex; justify-content: space-between; align-items: center; height: 22px; padding: 0 13px 0 5px; font-size: 9.800px; }
.sw { width: 27px; height: 13px; border-radius: 7px; display: flex; align-items: center; font-size: 7px; gap: 1px; }
.sw i { width: 7px; height: 7px; border-radius: 50%; }
.sw.off { border: 1px solid #777; padding-left: 3px; color: #555; }
.sw.off i { background: #666; }
.sw.on { background: #117865; color: #fff; justify-content: flex-end; padding-right: 3px; }
.sw.on i { background: #fff; }
.data-search { height: 20px; margin: 7px 4px 0 3px; background: #fff; border: 1px solid #e1dfdd; border-bottom-color: #8a8886; border-radius: 3px; display: flex; align-items: center; padding-left: 10px; font-size: 10.500px; color: #605e5c; }
.data-search svg { width: 12px; height: 12px; stroke: #555; margin-right: 5px; }
.tree { padding: 7px 0 0 12px; }
.tree li { height: 20px; display: flex; align-items: center; font-size: 9.400px; letter-spacing: -.05px; color: #3b3a39; }
.tw { width: 6px; height: 10px; stroke: #666; margin-right: 7px; }
.tb { width: 12px; height: 12px; stroke: #333; margin-right: 2px; }

/* status */
.status { height: 20px; flex: none; background: #f3f2f1; border-top: 1px solid #e1dfdd; display: flex; align-items: center; justify-content: space-between; font-size: 9.700px; color: #605e5c; padding: 0 3px; }
.st-right { display: flex; align-items: center; }
.zm-minus, .zm-plus { color: #555; font-size: 11px; }
.slider { width: 82px; height: 1px; background: #555; margin: 0 6px; position: relative; display: block; }
.slider i { position: absolute; left: 42px; top: -4px; width: 4px; height: 9px; background: #555; }
.zm-val { margin-left: 10px; color: #888; }
.fit { width: 14px; height: 12px; margin: 0 12px 0 11px; stroke: #ccc; }
.fit-c { stroke: #555; }
.st-upd { letter-spacing: -.1px; }

/* watermark */
.watermark { position: absolute; left: 702px; top: 738px; width: 196px; display: flex; flex-direction: column; align-items: center; pointer-events: none; z-index: 5; color: rgba(170,170,170,.4); }
.wm-ar { font: 700 55px/76px "DejaVu Sans", sans-serif; }
.wm-en { font: 600 31px/34px "Noto Sans", sans-serif; }
```
